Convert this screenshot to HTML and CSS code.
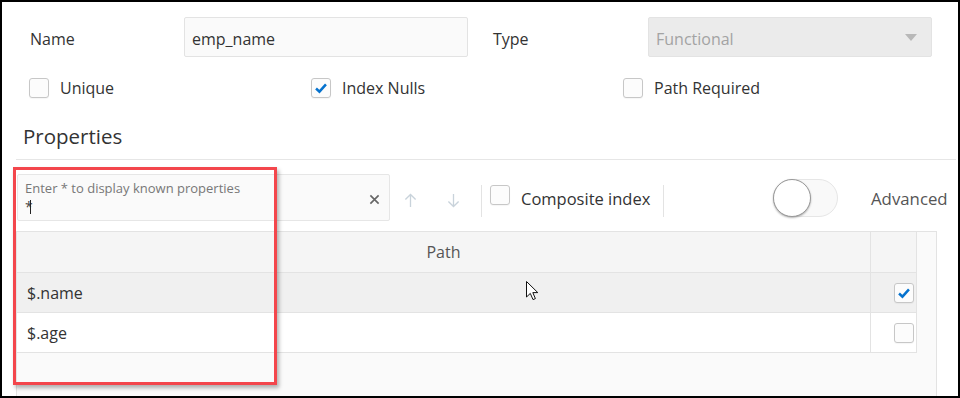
FILE: index.html
```html
<!DOCTYPE html>
<html lang="en">
<head>
    <meta charset="UTF-8">
    <title>Create Index</title>
    <link rel="stylesheet" href="styles.css">
</head>
<body>
    <div class="frame">
        <!-- Name / Type -->
        <div class="form-grid">
            <span class="field-label">Name</span>
            <div class="text-input">emp_name</div>
            <span class="field-label">Type</span>
            <div class="select-input">
                <span>Functional</span>
                <span class="caret"></span>
            </div>
        </div>

        <!-- Options -->
        <div class="options-row">
            <label class="check-item opt-unique"><span class="checkbox"></span>Unique</label>
            <label class="check-item opt-nulls">
                <span class="checkbox checked">
                    <svg viewBox="0 0 20 20"><polyline points="4.5,10.5 8.3,14 15.5,6"/></svg>
                </span>Index Nulls
            </label>
            <label class="check-item"><span class="checkbox"></span>Path Required</label>
        </div>

        <h2 class="section-title">Properties</h2>

        <!-- Toolbar -->
        <div class="toolbar">
            <div class="search-box">
                <span class="search-hint">Enter * to display known properties</span>
                <span class="search-value">*<span class="caret-line"></span></span>
                <svg class="clear-icon" viewBox="0 0 12 12"><path d="M1.5 1.5 L10.5 10.5 M10.5 1.5 L1.5 10.5"/></svg>
            </div>
            <svg class="move-icon up" viewBox="0 0 14 16"><path d="M7 15 V1.5 M1.5 7 L7 1.5 L12.5 7"/></svg>
            <svg class="move-icon down" viewBox="0 0 14 16"><path d="M7 1 V14.5 M1.5 9 L7 14.5 L12.5 9"/></svg>
            <span class="divider first"></span>
            <label class="check-item composite"><span class="checkbox"></span>Composite index</label>
            <span class="divider second"></span>
            <span class="toggle"><span class="knob"></span></span>
            <span class="toggle-label">Advanced</span>
        </div>

        <!-- Paths table -->
        <div class="table-wrap">
            <table class="prop-table">
                <thead>
                    <tr><th class="col-path">Path</th><th class="col-check"></th></tr>
                </thead>
                <tbody>
                    <tr class="selected">
                        <td class="col-path">$.name</td>
                        <td class="col-check">
                            <span class="checkbox checked">
                                <svg viewBox="0 0 20 20"><polyline points="4.5,10.5 8.3,14 15.5,6"/></svg>
                            </span>
                        </td>
                    </tr>
                    <tr>
                        <td class="col-path">$.age</td>
                        <td class="col-check"><span class="checkbox"></span></td>
                    </tr>
                </tbody>
            </table>
        </div>

        <!-- Annotation and pointer over the screenshot -->
        <div class="annotation"></div>
        <svg class="pointer" viewBox="0 0 13 20"><path d="M0.5 0.5 V16 L4.3 12.4 L7 18.6 L9.4 17.6 L6.8 11.6 L11.8 11.6 Z"/></svg>
    </div>
</body>
</html>
```

FILE: styles.css
```css
* {
    margin: 0;
    padding: 0;
    box-sizing: border-box;
}
body {
    font-family: 'Open Sans', 'Noto Sans', sans-serif;
    font-size: 16px;
    color: #333;
    background: white;
}
.frame {
    position: relative;
    width: 960px;
    height: 398px;
    border: 2px solid #000;
    overflow: hidden;
    background: white;
}

/* Name / Type */
.form-grid {
    display: grid;
    grid-template-columns: 154px 284px 25px 155px 284px;
    align-items: center;
    padding: 15px 0 0 28px;
}
.form-grid .field-label:nth-of-type(2) {
    grid-column: 4;
}
.field-label {
    padding-top: 3px;
}
.text-input, .select-input {
    height: 40px;
    border: 1px solid #e3e3e3;
    border-radius: 2px;
    padding: 3px 7px 0;
    display: flex;
    align-items: center;
}
.text-input {
    background: #fafafa;
}
.select-input {
    background: #ebebeb;
    color: #a3a3a3;
    justify-content: space-between;
}
.caret {
    width: 0;
    height: 0;
    border-left: 6px solid transparent;
    border-right: 6px solid transparent;
    border-top: 7px solid #b8b8b8;
    margin: 0 7px 3px 0;
}

/* Checkboxes */
.options-row {
    display: flex;
    padding: 21px 0 0 27px;
}
.options-row .opt-unique { width: 282px; }
.options-row .opt-nulls { width: 312px; }
.check-item {
    display: flex;
    align-items: center;
    gap: 11px;
    height: 20px;
}
.checkbox {
    width: 20px;
    height: 20px;
    border: 1px solid #c7c7c7;
    border-radius: 3px;
    background: #fcfcfc;
    display: inline-flex;
    align-items: center;
    justify-content: center;
    box-shadow: 0 1px 1px rgba(0,0,0,0.04);
}
.checkbox svg {
    width: 20px;
    height: 20px;
}
.checkbox polyline {
    fill: none;
    stroke: #0572ce;
    stroke-width: 2.8;
}

/* Properties */
.section-title {
    font-size: 20.5px;
    font-weight: normal;
    line-height: 28px;
    margin: 24px 2px 0 14px;
    padding: 0 0 9px 7px;
    border-bottom: 1px solid #e6e6e6;
}

/* Toolbar */
.toolbar {
    display: flex;
    align-items: center;
    margin: 14px 0 0 15px;
    height: 47px;
}
.search-box {
    position: relative;
    width: 373px;
    height: 47px;
    border: 1px solid #e6e6e6;
    border-radius: 2px;
    background: #fafafa;
    padding: 5px 7px;
}
.search-hint {
    display: block;
    font-size: 13px;
    color: #777;
    line-height: 16px;
}
.search-value {
    display: flex;
    align-items: flex-start;
    margin-top: 4px;
    font-size: 14px;
    line-height: 14px;
    color: #444;
}
.caret-line {
    width: 1px;
    height: 14px;
    background: #222;
    margin-left: -3px;
}
.clear-icon {
    position: absolute;
    right: 9px;
    top: 19px;
    width: 11px;
    height: 11px;
}
.clear-icon path {
    stroke: #666;
    stroke-width: 1.8;
}
.move-icon {
    width: 13px;
    height: 15px;
    margin-top: 5px;
}
.move-icon path {
    fill: none;
    stroke: #c9d3db;
    stroke-width: 1.4;
}
.move-icon.up { margin-left: 14px; }
.move-icon.down { margin-left: 30px; }
.divider {
    width: 1px;
    height: 32px;
    background: #e3e3e3;
    margin-top: 6px;
}
.divider.first { margin-left: 21px; }
.composite {
    width: 173px;
    margin-left: 8px;
    margin-top: 1px;
    font-size: 16.5px;
}
.composite .checkbox { margin-top: -6px; }
.toggle {
    position: relative;
    width: 65px;
    height: 38px;
    border: 1px solid #e6e6e6;
    border-radius: 19px;
    background: #f9f9f9;
    margin-left: 109px;
    margin-top: 1px;
}
.knob {
    position: absolute;
    left: -1px;
    top: -1px;
    width: 38px;
    height: 38px;
    border-radius: 50%;
    background: white;
    border: 1px solid #999;
    box-shadow: 0 1px 2px rgba(0,0,0,0.3);
}
.toggle-label {
    margin-left: 33px;
    font-size: 16.8px;
    color: #555;
    margin-top: 2px;
}

/* Table */
.table-wrap {
    margin: 10px 0 0 14px;
    width: 921px;
    height: 200px;
    border: 1px solid #e3e3e3;
    background: #fafafa;
}
.prop-table {
    width: 900px;
    border-collapse: collapse;
}
.prop-table th {
    height: 40px;
    background: #f5f5f5;
    font-weight: normal;
    color: #555;
    border-bottom: 1px solid #e3e3e3;
    border-right: 1px solid #e3e3e3;
}
.prop-table td {
    height: 40px;
    padding-top: 2px;
    background: white;
    border-bottom: 1px solid #e3e3e3;
    border-right: 1px solid #e3e3e3;
}
.prop-table tr.selected td {
    background: #f0f0f0;
}
.prop-table .col-path {
    width: 854px;
}
.prop-table td.col-path {
    padding-left: 10px;
}
.prop-table .col-check {
    width: 46px;
    text-align: right;
    padding-right: 2px;
}
.prop-table td.col-check {
    padding-top: 0;
}
.prop-table td .checkbox {
    vertical-align: middle;
}

/* Overlays */
.annotation {
    position: absolute;
    left: 11px;
    top: 165px;
    width: 264px;
    height: 218px;
    border: 3px solid #f3464c;
    box-shadow: 2px 3px 4px rgba(0,0,0,0.3);
}
.pointer {
    position: absolute;
    left: 524px;
    top: 279px;
    width: 13px;
    height: 20px;
}
.pointer path {
    fill: white;
    stroke: #111;
    stroke-width: 1;
}
```
